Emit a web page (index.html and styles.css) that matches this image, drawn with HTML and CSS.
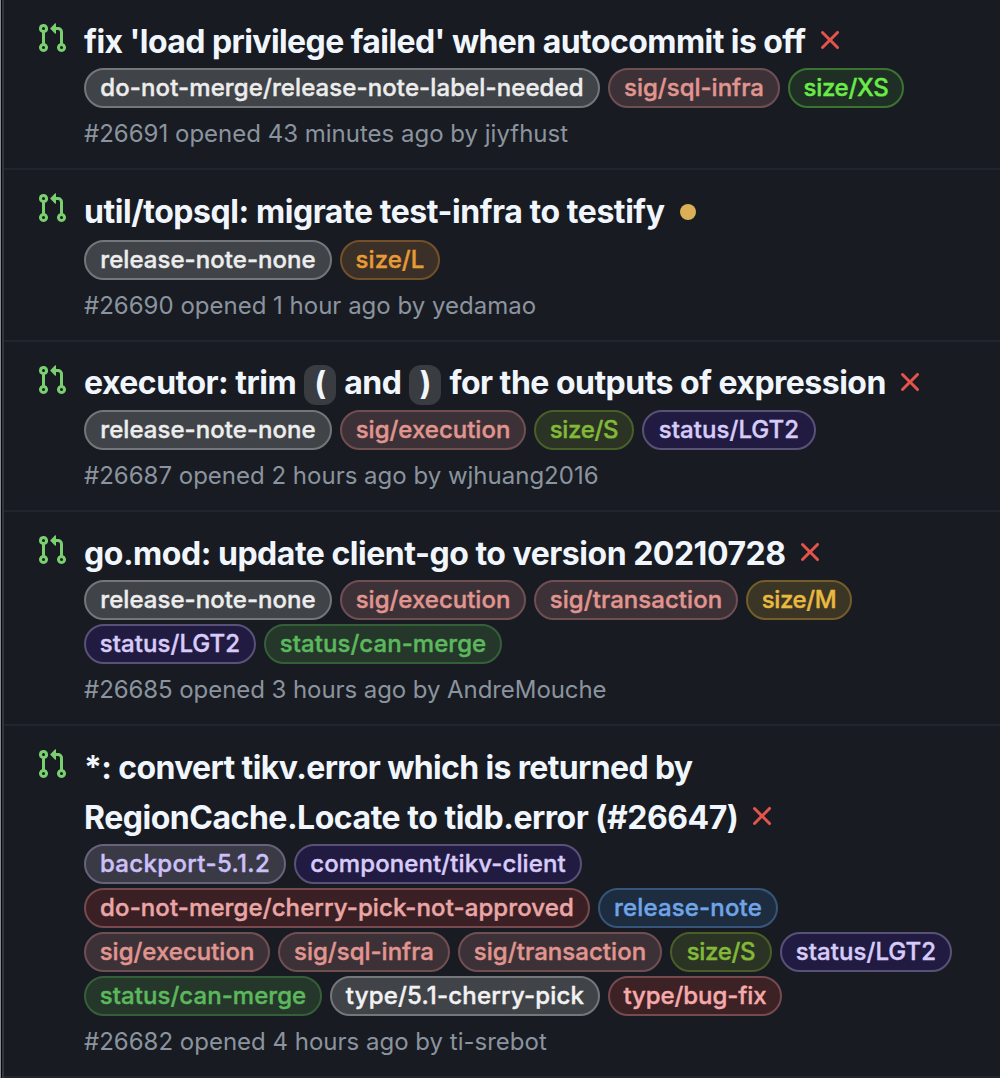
FILE: index.html
```html
<!DOCTYPE html>
<html lang="en">
<head>
<meta charset="utf-8">
<title>Pull requests</title>
<link rel="stylesheet" href="styles.css">
</head>
<body>
<svg class="sprite" aria-hidden="true">
  <symbol id="pr" viewBox="0 0 16 16"><path fill-rule="evenodd" d="M7.177 3.073L9.573.677A.25.25 0 0110 .854v4.792a.25.25 0 01-.427.177L7.177 3.427a.25.25 0 010-.354zM3.75 2.5a.75.75 0 100 1.5.75.75 0 000-1.5zm-2.25.75a2.25 2.25 0 113 2.122v5.256a2.251 2.251 0 11-1.5 0V5.372A2.25 2.25 0 011.5 3.25zM11 2.5h-1V4h1a1 1 0 011 1v5.628a2.251 2.251 0 101.5 0V5A2.5 2.5 0 0011 2.5zm1 10.25a.75.75 0 111.5 0 .75.75 0 01-1.5 0zM3.75 12a.75.75 0 100 1.5.75.75 0 000-1.5z"/></symbol>
  <symbol id="x" viewBox="0 0 16 16"><path fill-rule="evenodd" d="M3.72 3.72a.75.75 0 011.06 0L8 6.94l3.22-3.22a.75.75 0 111.06 1.06L9.06 8l3.22 3.22a.75.75 0 11-1.06 1.06L8 9.06l-3.22 3.22a.75.75 0 01-1.06-1.06L6.94 8 3.72 4.78a.75.75 0 010-1.06z"/></symbol>
  <symbol id="dot" viewBox="0 0 16 16"><path d="M8 4a4 4 0 100 8 4 4 0 000-8z"/></symbol>
</svg>
<main class="list">
  <article class="row">
    <svg class="pr-icon"><use href="#pr"/></svg>
    <div class="content">
      <h2 class="title"><span class="title-text t1">fix 'load privilege failed' when autocommit is off</span><svg class="status fail"><use href="#x"/></svg></h2>
      <div class="labels"><span class="label gray w-needed">do-not-merge/release-note-label-needed</span><span class="label sig w-sql">sig/sql-infra</span><span class="label xs">size/XS</span></div>
      <p class="meta">#26691 opened 43 minutes ago by jiyfhust</p>
    </div>
  </article>
  <article class="row pending">
    <svg class="pr-icon"><use href="#pr"/></svg>
    <div class="content">
      <h2 class="title"><span class="title-text t2">util/topsql: migrate test-infra to testify</span><svg class="status wait"><use href="#dot"/></svg></h2>
      <div class="labels"><span class="label gray w-none">release-note-none</span><span class="label l">size/L</span></div>
      <p class="meta">#26690 opened 1 hour ago by yedamao</p>
    </div>
  </article>
  <article class="row coded">
    <svg class="pr-icon"><use href="#pr"/></svg>
    <div class="content">
      <h2 class="title"><span class="title-text t3">executor: trim <code>(</code> and <code>)</code> for the outputs of expression</span><svg class="status fail"><use href="#x"/></svg></h2>
      <div class="labels"><span class="label gray w-none">release-note-none</span><span class="label sig w-exec">sig/execution</span><span class="label s">size/S</span><span class="label lgt w-lgt wide">status/LGT2</span></div>
      <p class="meta">#26687 opened 2 hours ago by wjhuang2016</p>
    </div>
  </article>
  <article class="row">
    <svg class="pr-icon"><use href="#pr"/></svg>
    <div class="content">
      <h2 class="title"><span class="title-text t4">go.mod: update client-go to version 20210728</span><svg class="status fail"><use href="#x"/></svg></h2>
      <div class="labels"><span class="label gray w-none">release-note-none</span><span class="label sig w-exec">sig/execution</span><span class="label sig w-trans">sig/transaction</span><span class="label m">size/M</span><span class="label lgt w-lgt">status/LGT2</span><span class="label merge">status/can-merge</span></div>
      <p class="meta tight">#26685 opened 3 hours ago by AndreMouche</p>
    </div>
  </article>
  <article class="row">
    <svg class="pr-icon"><use href="#pr"/></svg>
    <div class="content">
      <h2 class="title"><span class="title-text t5">*: convert tikv.error which is returned by</span><br><span class="title-text t6">RegionCache.Locate to tidb.error (#26647)</span><svg class="status fail"><use href="#x"/></svg></h2>
      <div class="labels"><span class="label backport">backport-5.1.2</span><span class="label lgt w-client">component/tikv-client</span><span class="label danger">do-not-merge/cherry-pick-not-approved</span><span class="label note">release-note</span><span class="label sig w-exec">sig/execution</span><span class="label sig w-sql">sig/sql-infra</span><span class="label sig w-trans">sig/transaction</span><span class="label s wide">size/S</span><span class="label lgt w-lgt">status/LGT2</span><span class="label merge">status/can-merge</span><span class="label white">type/5.1-cherry-pick</span><span class="label bug">type/bug-fix</span></div>
      <p class="meta">#26682 opened 4 hours ago by ti-srebot</p>
    </div>
  </article>
</main>
</body>
</html>
```
FILE: styles.css
```css
* { box-sizing: border-box; }
body { margin: 0; background: #181b22; font-family: Inter, "Liberation Sans", sans-serif; color: #f0f6fc; border-left: 1px solid #85888c; overflow: hidden; }
.sprite { display: none; }
.list { margin-left: 1px; border-left: 2px solid #30363d; box-shadow: -1px 0 #050608; height: 1078px; }
.row { display: flex; padding: 16px 40px 0 32px; border-bottom: 2px solid #22252d; }
.pr-icon { flex: none; width: 32px; height: 32px; margin: 6px 16px 0 0; fill: #7ad06f; }
.content { flex: 1; min-width: 0; }
.title { margin: 0; padding-top: 1px; margin-bottom: 1px; font-size: 32px; line-height: 50px; font-weight: 700; white-space: nowrap; }
.pending .title { margin-bottom: 3px; }
.coded .title { padding-top: 0; margin-bottom: 2px; }
.coded .status { vertical-align: -4px; }
.title-text { display: inline-block; }
.t1 { width: 722px; letter-spacing: -0.57px; }
.t2 { width: 580px; letter-spacing: -0.44px; }
.t3 { width: 802px; letter-spacing: -0.52px; }
.t4 { width: 702px; letter-spacing: -0.48px; }
.t5 { width: 608px; letter-spacing: -0.64px; }
.t6 { width: 654px; letter-spacing: -0.48px; }
.title code { display: inline-block; width: 32px; height: 40px; margin: -1px 1px 0; border-radius: 12px; background: #393c41; font: inherit; line-height: 38px; text-align: center; vertical-align: middle; }
.status { width: 32px; height: 32px; margin-left: 8px; vertical-align: -3px; }
.fail { fill: #e5534b; }
.wait { fill: #daaf55; vertical-align: -5px; }
.labels { display: flex; flex-wrap: wrap; gap: 4px 8px; }
.label { height: 40px; padding: 0; border: 2px solid; border-radius: 20px; font-size: 24px; line-height: 35px; font-weight: 500; letter-spacing: 0.05px; text-align: center; white-space: nowrap; -webkit-text-stroke: 0.4px; }
.meta { margin: 0; height: 60px; padding-top: 8px; font-size: 24px; line-height: 36px; color: #8b949e; white-space: nowrap; }
.tight { letter-spacing: -0.07px; }
.gray, .white { color: #ededed; background: #404347; border-color: #74777a; }
.w-needed { width: 516px; letter-spacing: 0.1px; }
.w-none { width: 248px; }
.sig { color: #e09590; background: #3c3136; border-color: #704f53; }
.w-sql { width: 172px; letter-spacing: 0; }
.w-exec { width: 186px; letter-spacing: 0; }
.w-trans { width: 204px; }
.xs { width: 116px; letter-spacing: -0.3px; color: #6aec48; background: #202f25; border-color: #3a7530; }
.l { width: 100px; color: #e69b36; background: #3b3027; border-color: #73502a; }
.s { width: 100px; letter-spacing: -0.3px; color: #82b938; background: #2b3424; border-color: #495f27; }
.s.wide { width: 102px; }
.m { width: 106px; letter-spacing: -0.4px; color: #e9b940; background: #3b3526; border-color: #735e2a; }
.lgt { color: #d8cbfa; background: #211b41; border-color: #5a5178; }
.w-lgt { width: 172px; }
.w-lgt.wide { width: 174px; }
.w-client { width: 288px; letter-spacing: 0.1px; }
.merge { width: 238px; color: #5cb85c; background: #25362b; border-color: #355f39; }
.backport { width: 202px; letter-spacing: 0.35px; color: #cdc0f8; background: #3a3946; border-color: #67637b; }
.danger { width: 506px; letter-spacing: 0.1px; color: #eaa6a6; background: #3a2024; border-color: #764a4e; }
.note { width: 180px; letter-spacing: 0.15px; color: #6fa5e8; background: #1e2c40; border-color: #365578; }
.white { width: 270px; letter-spacing: 0.2px; color: #f2f2f2; }
.bug { width: 174px; letter-spacing: -0.1px; color: #f6aaaa; background: #3c2125; border-color: #764a4e; }
```
